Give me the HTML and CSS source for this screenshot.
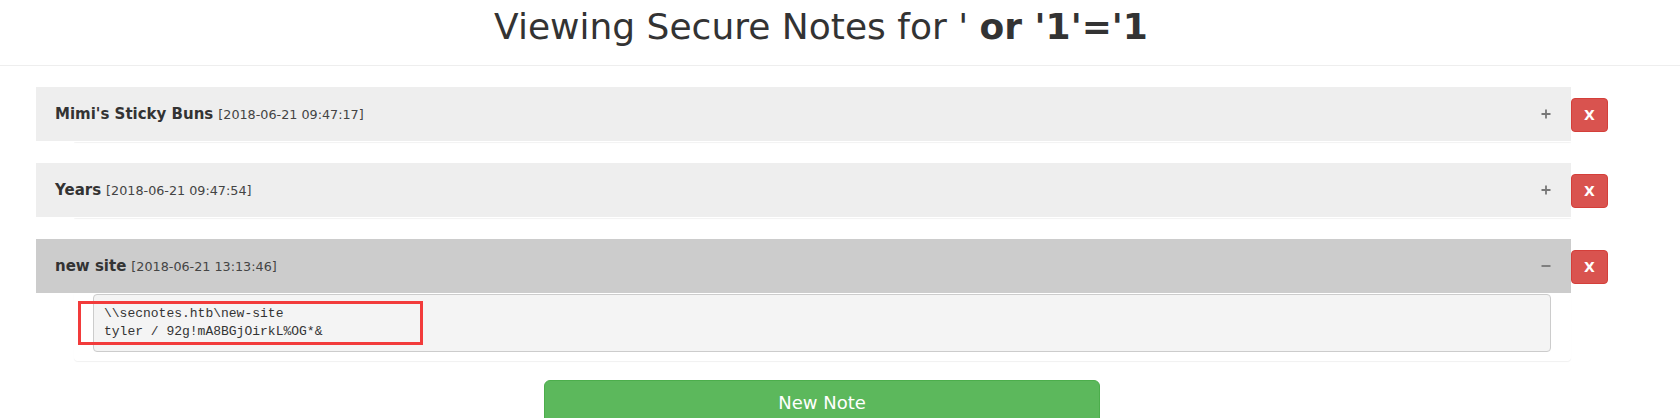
FILE: index.html
```html
<!DOCTYPE html>
<html>
<head>
<meta charset="utf-8">
<title>Secure Notes</title>
<link rel="stylesheet" href="styles.css">
</head>
<body>
<header class="page-header">
  <h1 class="title">Viewing Secure Notes for ' <strong>or '1'='1</strong></h1>
</header>
<main class="notes">
  <div class="note-row">
    <div class="note">
      <div class="note-heading">
        <span class="note-title">Mimi's Sticky Buns</span>
        <span class="note-date">[2018-06-21 09:47:17]</span>
        <svg class="toggle" width="10" height="10" viewBox="0 0 10 10"><path d="M5 0.5V9.5M0.5 5H9.5" stroke="#777" stroke-width="1.8" fill="none"/></svg>
      </div>
      <div class="note-body collapsed"></div>
    </div>
    <button class="btn-delete">X</button>
  </div>
  <div class="note-row">
    <div class="note">
      <div class="note-heading">
        <span class="note-title">Years</span>
        <span class="note-date">[2018-06-21 09:47:54]</span>
        <svg class="toggle" width="10" height="10" viewBox="0 0 10 10"><path d="M5 0.5V9.5M0.5 5H9.5" stroke="#777" stroke-width="1.8" fill="none"/></svg>
      </div>
      <div class="note-body collapsed"></div>
    </div>
    <button class="btn-delete">X</button>
  </div>
  <div class="note-row">
    <div class="note">
      <div class="note-heading open">
        <span class="note-title">new site</span>
        <span class="note-date">[2018-06-21 13:13:46]</span>
        <svg class="toggle" width="10" height="10" viewBox="0 0 10 10"><path d="M0.5 5H9.5" stroke="#777" stroke-width="1.8" fill="none"/></svg>
      </div>
      <div class="note-body">
        <pre class="note-text">\\secnotes.htb\new-site
tyler / 92g!mA8BGjOirkL%OG*&amp;</pre>
        <div class="highlight"></div>
      </div>
    </div>
    <button class="btn-delete">X</button>
  </div>
</main>
<div class="actions">
  <button class="btn-new">New Note</button>
</div>
</body>
</html>
```
FILE: styles.css
```css
html, body {
  margin: 0;
  padding: 0;
  overflow: hidden;
  background: #fff;
}

body {
  font-family: "DejaVu Sans", sans-serif;
  color: #333;
  font-size: 14px;
}

.page-header {
  box-sizing: border-box;
  height: 66px;
  padding: 7px 38px 0 0;
  border-bottom: 1px solid #eee;
  text-align: center;
}

.title {
  margin: 0;
  font-size: 36px;
  font-weight: normal;
  line-height: 1.1;
  color: #333;
}

.title strong {
  font-weight: bold;
}

.notes {
  padding: 21px 0 0 36px;
}

.note-row {
  display: flex;
  align-items: flex-start;
  margin-bottom: 21px;
}

.note-row:last-child {
  margin-bottom: 19px;
}

.note {
  width: 1535px;
}

.note-heading {
  box-sizing: border-box;
  height: 54px;
  display: flex;
  align-items: center;
  padding: 0 20px 0 19px;
  background: #eee;
  color: #333;
}

.note-heading.open {
  background: #ccc;
}

.note-title {
  font-size: 15px;
  font-weight: bold;
}

.note-date {
  font-size: 12.75px;
  margin-left: 5px;
  color: #444;
}

.toggle {
  margin-left: auto;
}

.note-body {
  position: relative;
  margin-left: 38px;
  background: #fff;
  border-radius: 0 0 4px 4px;
  box-shadow: 0 1px 1px rgba(0, 0, 0, 0.06);
  padding: 1px 20px 9px 19px;
}

.note-body.collapsed {
  height: 1px;
  padding: 0;
}

.note-text {
  margin: 0;
  padding: 10px 10px 10px 10px;
  background: #f4f4f4;
  border: 1px solid #ccc;
  border-radius: 4px;
  font-family: "Liberation Mono", monospace;
  font-size: 13px;
  line-height: 18px;
  color: #333;
}

.highlight {
  position: absolute;
  left: 4px;
  top: 8px;
  width: 339px;
  height: 38px;
  border: 3px solid #f23b3b;
}

.btn-delete {
  margin-top: 11px;
  width: 37px;
  height: 34px;
  padding: 0;
  background: #d9534f;
  border: 1px solid #d43f3a;
  border-radius: 4px;
  color: #fff;
  font-family: "DejaVu Sans", sans-serif;
  font-size: 14px;
  font-weight: bold;
}

.actions {
  padding-left: 544px;
}

.btn-new {
  width: 556px;
  height: 46px;
  padding: 10px 16px;
  background: #5cb85c;
  border: 1px solid #4cae4c;
  border-radius: 6px;
  color: #fff;
  font-family: "DejaVu Sans", sans-serif;
  font-size: 18px;
  line-height: 24px;
}
```
